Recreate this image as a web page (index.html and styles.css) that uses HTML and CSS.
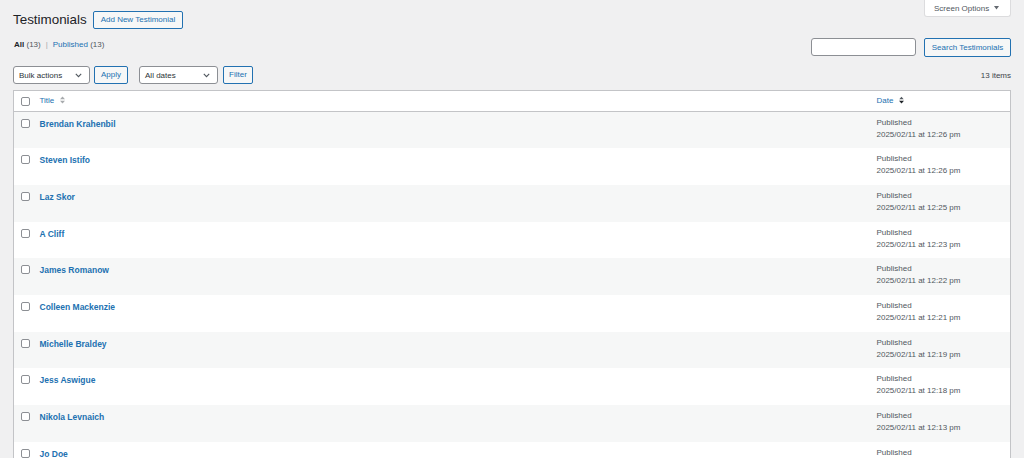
FILE: index.html
```html
<!DOCTYPE html>
<html lang="en">
<head>
<meta charset="utf-8">
<title>Testimonials</title>
<link rel="stylesheet" href="styles.css">
</head>
<body>
<div class="wrap">
  <div class="screen-meta">
    <button class="screen-options" type="button">Screen Options
      <svg class="caret" width="5" height="4" viewBox="0 0 5 4"><polygon points="0,0 5,0 2.5,3.5" fill="#646970"/></svg>
    </button>
  </div>

  <div class="page-head">
    <h1 class="page-title">Testimonials</h1>
    <a class="btn wide" href="#">Add New Testimonial</a>
  </div>

  <div class="filters-row">
    <ul class="subsubsub">
      <li><span class="current">All</span> <span class="count">(13)</span></li>
      <li class="sep">|</li>
      <li><a href="#">Published</a> <span class="count">(13)</span></li>
    </ul>
    <div class="search-box">
      <input class="search-input" type="search" aria-label="Search">
      <button class="btn" type="button">Search Testimonials</button>
    </div>
  </div>

  <div class="tablenav">
    <div class="actions">
      <div class="select bulk">Bulk actions
        <svg class="chev" width="7" height="5" viewBox="0 0 7 5"><polyline points="0.8,0.8 3.5,3.6 6.2,0.8" fill="none" stroke="#50575e" stroke-width="1.1"/></svg>
      </div>
      <button class="btn" type="button">Apply</button>
    </div>
    <div class="actions second">
      <div class="select dates">All dates
        <svg class="chev" width="7" height="5" viewBox="0 0 7 5"><polyline points="0.8,0.8 3.5,3.6 6.2,0.8" fill="none" stroke="#50575e" stroke-width="1.1"/></svg>
      </div>
      <button class="btn narrow" type="button">Filter</button>
    </div>
    <div class="items-count">13 items</div>
  </div>

  <table class="list-table">
    <thead>
      <tr>
        <th class="col-cb"><span class="cb"></span></th>
        <th class="col-title"><a href="#">Title</a>
          <svg class="sort" width="5" height="8" viewBox="0 0 5 8"><polygon points="0,3.2 2.5,0.5 5,3.2" fill="#a7aaad"/><polygon points="0,4.8 2.5,7.5 5,4.8" fill="#a7aaad"/></svg>
        </th>
        <th class="col-date"><a href="#">Date</a>
          <svg class="sort" width="5" height="8" viewBox="0 0 5 8"><polygon points="0.3,3.2 2.5,0.8 4.7,3.2" fill="#50575e"/><polygon points="0,4.8 2.5,7.5 5,4.8" fill="#1d2327"/></svg>
        </th>
      </tr>
    </thead>
    <tbody>
      <tr><td class="col-cb"><span class="cb"></span></td><td class="col-title"><a class="row-title" href="#">Brendan Krahenbil</a></td><td class="col-date">Published<br>2025/02/11 at 12:26 pm</td></tr>
      <tr><td class="col-cb"><span class="cb"></span></td><td class="col-title"><a class="row-title" href="#">Steven Istifo</a></td><td class="col-date">Published<br>2025/02/11 at 12:26 pm</td></tr>
      <tr><td class="col-cb"><span class="cb"></span></td><td class="col-title"><a class="row-title" href="#">Laz Skor</a></td><td class="col-date">Published<br>2025/02/11 at 12:25 pm</td></tr>
      <tr><td class="col-cb"><span class="cb"></span></td><td class="col-title"><a class="row-title" href="#">A Cliff</a></td><td class="col-date">Published<br>2025/02/11 at 12:23 pm</td></tr>
      <tr><td class="col-cb"><span class="cb"></span></td><td class="col-title"><a class="row-title" href="#">James Romanow</a></td><td class="col-date">Published<br>2025/02/11 at 12:22 pm</td></tr>
      <tr><td class="col-cb"><span class="cb"></span></td><td class="col-title"><a class="row-title" href="#">Colleen Mackenzie</a></td><td class="col-date">Published<br>2025/02/11 at 12:21 pm</td></tr>
      <tr><td class="col-cb"><span class="cb"></span></td><td class="col-title"><a class="row-title" href="#">Michelle Braldey</a></td><td class="col-date">Published<br>2025/02/11 at 12:19 pm</td></tr>
      <tr><td class="col-cb"><span class="cb"></span></td><td class="col-title"><a class="row-title" href="#">Jess Aswigue</a></td><td class="col-date">Published<br>2025/02/11 at 12:18 pm</td></tr>
      <tr><td class="col-cb"><span class="cb"></span></td><td class="col-title"><a class="row-title" href="#">Nikola Levnaich</a></td><td class="col-date">Published<br>2025/02/11 at 12:13 pm</td></tr>
      <tr><td class="col-cb"><span class="cb"></span></td><td class="col-title"><a class="row-title" href="#">Jo Doe</a></td><td class="col-date">Published<br>2025/02/11 at 12:11 pm</td></tr>
      <tr><td class="col-cb"><span class="cb"></span></td><td class="col-title"><a class="row-title" href="#">Mark Ellis</a></td><td class="col-date">Published<br>2025/02/11 at 12:09 pm</td></tr>
      <tr><td class="col-cb"><span class="cb"></span></td><td class="col-title"><a class="row-title" href="#">Sarah Tan</a></td><td class="col-date">Published<br>2025/02/11 at 12:07 pm</td></tr>
      <tr><td class="col-cb"><span class="cb"></span></td><td class="col-title"><a class="row-title" href="#">David Chen</a></td><td class="col-date">Published<br>2025/02/11 at 12:05 pm</td></tr>
    </tbody>
  </table>
</div>
</body>
</html>
```

FILE: styles.css
```css
* { box-sizing: border-box; }

html, body {
  margin: 0;
  padding: 0;
  background: #f0f0f1;
  font-family: "Liberation Sans", Arial, Helvetica, sans-serif;
  font-size: 8px;
  color: #3c434a;
}

a { color: #2271b1; text-decoration: none; }

.wrap {
  padding: 0 13px 0 13px;
}

.screen-meta {
  float: right;
}

.screen-options {
  display: flex;
  align-items: center;
  gap: 5px;
  width: 87px;
  height: 17px;
  padding: 0 0 0 9px;
  background: #fff;
  border: 1px solid #dcdcde;
  border-top: none;
  border-radius: 0 0 3px 3px;
  font-family: inherit;
  font-size: 8px;
  color: #50575e;
}

.page-head {
  display: flex;
  align-items: center;
  padding-top: 11px;
  height: 29px;
}

.page-title {
  margin: 0 6px 0 0;
  font-size: 13.4px;
  font-weight: 400;
  line-height: 18px;
  color: #1d2327;
}

.btn {
  display: inline-flex;
  align-items: center;
  justify-content: center;
  height: 18px;
  padding: 0 6px;
  background: #f6f7f7;
  border: 1px solid #2271b1;
  border-radius: 2px;
  color: #2271b1;
  font-family: inherit;
  font-size: 8px;
  line-height: 1;
  white-space: nowrap;
}

.btn.wide { padding: 0 7px; }
.btn.narrow { padding: 0 5px; }

.filters-row {
  display: flex;
  justify-content: space-between;
  align-items: flex-start;
  margin-top: 9px;
  height: 19px;
}

.subsubsub {
  display: flex;
  gap: 4px;
  list-style: none;
  margin: 2px 0 0 1px;
  padding: 0;
  font-size: 8px;
  line-height: 10px;
  color: #646970;
}

.subsubsub .current { font-weight: 700; color: #1d2327; }
.subsubsub .count { color: #50575e; }
.subsubsub .sep { color: #a7aaad; padding: 0 1px; }

.search-box {
  display: flex;
  gap: 8px;
}

.search-input {
  width: 105px;
  height: 18px;
  margin: 0;
  padding: 0 5px;
  background: #fff;
  border: 1px solid #8c8f94;
  border-radius: 3px;
  font-family: inherit;
  font-size: 8px;
}

.search-box .btn {
  width: 87px;
  height: 19px;
}

.tablenav {
  display: flex;
  align-items: center;
  margin-top: 9px;
  height: 18px;
}

.actions {
  display: flex;
  gap: 4px;
}

.actions.second {
  margin-left: 11px;
  gap: 5px;
}

.select {
  display: flex;
  align-items: center;
  justify-content: space-between;
  height: 18px;
  padding: 0 7px 0 5px;
  background: #fff;
  border: 1px solid #8c8f94;
  border-radius: 3px;
  color: #2c3338;
  font-size: 8px;
}

.select.bulk { width: 77px; }
.select.dates { width: 79px; }

.items-count {
  margin-left: auto;
  color: #3c434a;
  font-size: 8px;
}

.list-table {
  width: 100%;
  margin-top: 6px;
  border-collapse: collapse;
  border: 1px solid #c3c4c7;
  background: #fff;
  table-layout: fixed;
}

.list-table th,
.list-table td {
  vertical-align: top;
  text-align: left;
  font-weight: 400;
  line-height: 12px;
}

.list-table thead th {
  height: 21px;
  padding: 4px 6px 0;
  border-bottom: 1px solid #c3c4c7;
  font-size: 8px;
  white-space: nowrap;
}

.list-table thead th a { color: #2271b1; }

.sort {
  margin-left: 3px;
  vertical-align: -1px;
}

.col-cb { width: 20px; }
.list-table .col-cb { padding: 0 0 0 7px; }
.list-table thead .col-cb { padding-top: 6px; }
.list-table tbody .col-cb { padding-top: 7px; }

.col-date { width: 140px; }

.cb {
  display: block;
  width: 9px;
  height: 9px;
  background: #fff;
  border: 1px solid #8c8f94;
  border-radius: 2px;
}

.list-table tbody tr { height: 36.7px; }
.list-table tbody tr:nth-child(odd) { background: #f6f7f7; }

.list-table tbody td {
  padding: 5px 6px 0;
  font-size: 8px;
}

.list-table tbody .col-date {
  padding-top: 5px;
  color: #50575e;
}

.row-title {
  font-size: 8.5px;
  font-weight: 700;
  color: #2271b1;
  line-height: 14px;
}
```
